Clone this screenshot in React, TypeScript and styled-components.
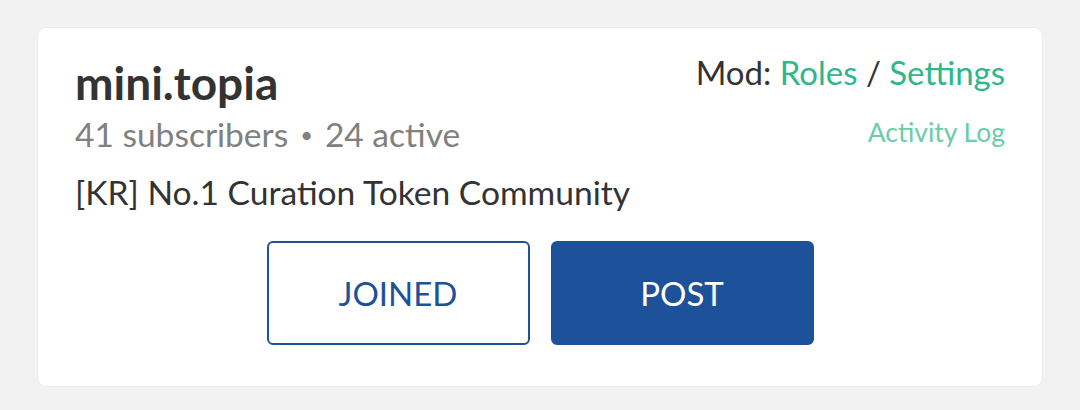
import React from "react";
import styled, { createGlobalStyle } from "styled-components";

const Global = createGlobalStyle`
  html, body { margin: 0; padding: 0; background: #f2f2f2; }
  body { font-family: Lato, "Noto Sans", sans-serif; }
`;

const Page = styled.div`
  padding: 28px 38px 24px 38px;
`;

const Card = styled.div`
  background: #ffffff;
  border-radius: 8px;
  box-shadow: 0 0 0 1px #ececec;
  height: 358px;
  box-sizing: border-box;
  padding: 28px 37px 0 37px;
  display: flex;
  flex-direction: column;
`;

const Top = styled.div`
  display: flex;
  justify-content: space-between;
`;

const Left = styled.div`
  display: flex;
  flex-direction: column;
`;

const Title = styled.div`
  font-size: 46px;
  font-weight: 700;
  color: #333333;
  line-height: 54px;
`;

const Stats = styled.div`
  font-size: 33.5px;
  color: #808080;
  line-height: 40px;
  margin-top: 4px;
`;

const Dot = styled.span`
  margin: 0 12px;
  font-size: 22px;
  vertical-align: 4px;
`;

const Desc = styled.div`
  font-size: 33.6px;
  color: #333333;
  line-height: 40px;
  margin-top: 17px;
`;

const Right = styled.div`
  display: flex;
  flex-direction: column;
  align-items: flex-end;
`;

const ModLine = styled.div`
  font-size: 33px;
  color: #333333;
  line-height: 32px;
`;

const Link = styled.span`
  color: #2eb789;
`;

const ActivityLog = styled.div`
  font-size: 26.5px;
  color: #6bcca8;
  line-height: 30px;
  margin-top: 29px;
`;

const Buttons = styled.div`
  display: flex;
  justify-content: center;
  gap: 21px;
  margin-top: 29px;
`;

const Button = styled.div<{ $primary?: boolean }>`
  width: 263px;
  height: 104px;
  box-sizing: border-box;
  border-radius: 6px;
  display: flex;
  align-items: center;
  justify-content: center;
  font-size: 33px;
  border: 2px solid #1d5199;
  background: ${(p) => (p.$primary ? "#1d5199" : "#ffffff")};
  color: ${(p) => (p.$primary ? "#ffffff" : "#1d5199")};
`;

export default function App() {
  return (
    <>
      <Global />
      <Page>
        <Card>
          <Top>
            <Left>
              <Title>mini.topia</Title>
              <Stats>
                41 subscribers<Dot>•</Dot>24 active
              </Stats>
              <Desc>[KR] No.1 Curation Token Community</Desc>
            </Left>
            <Right>
              <ModLine>
                Mod: <Link>Roles</Link> / <Link>Settings</Link>
              </ModLine>
              <ActivityLog>Activity Log</ActivityLog>
            </Right>
          </Top>
          <Buttons>
            <Button>JOINED</Button>
            <Button $primary>POST</Button>
          </Buttons>
        </Card>
      </Page>
    </>
  );
}
